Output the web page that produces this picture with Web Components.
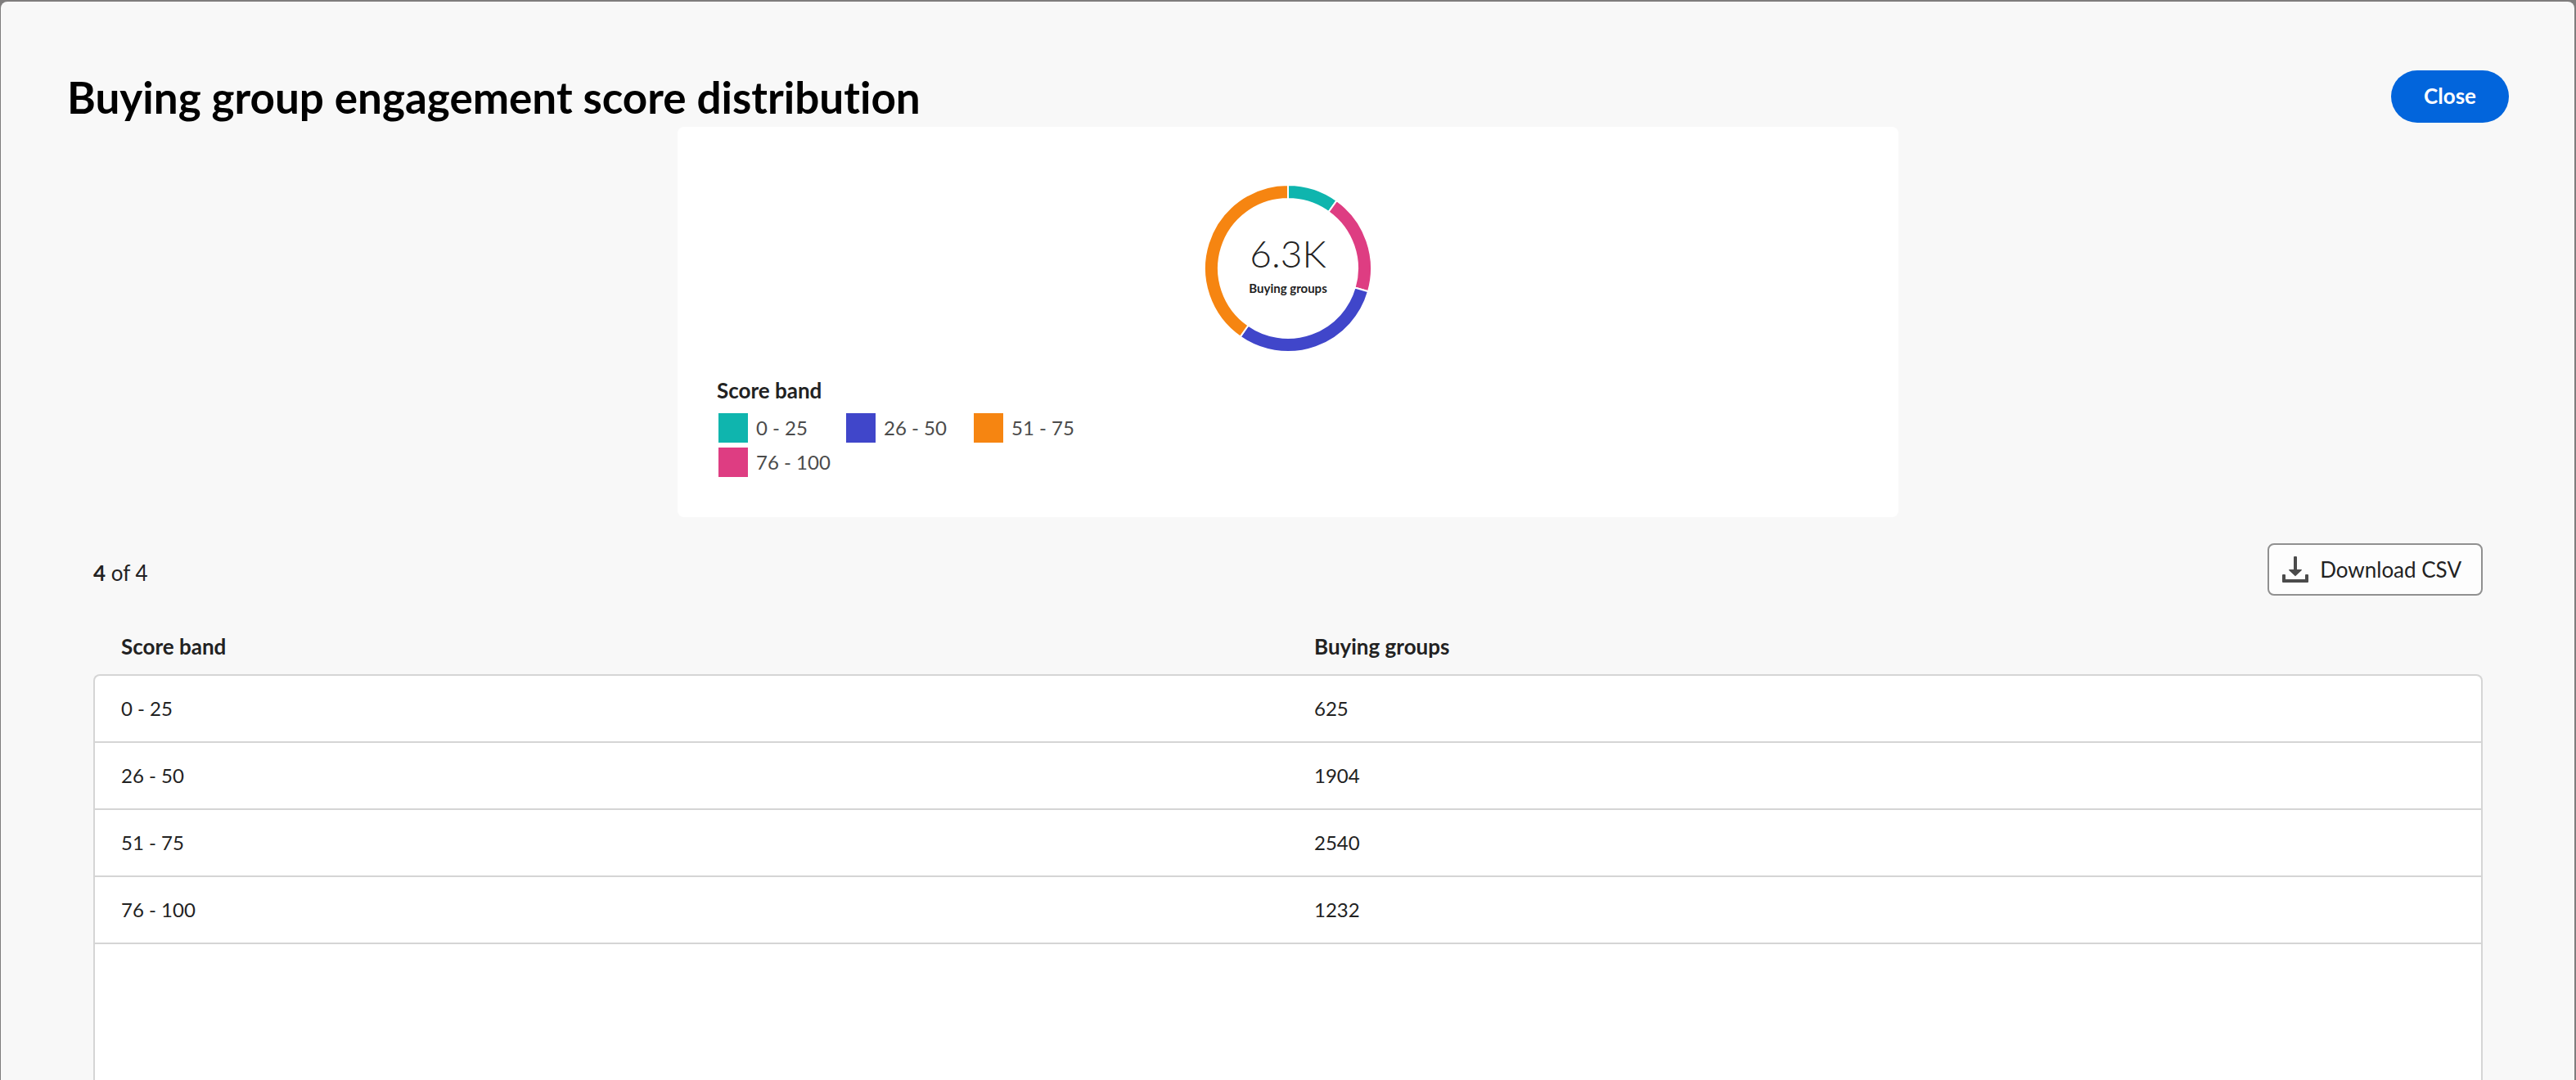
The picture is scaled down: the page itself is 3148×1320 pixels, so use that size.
<!DOCTYPE html>
<html lang="en">
<head>
<meta charset="utf-8">
<title>Buying group engagement score distribution</title>
<style>
html, body { margin: 0; height: 100%; }
body {
  background: #7f7d7d;
  color: #222;
  font-family: Lato, "Noto Sans", sans-serif;
  font-size: 26px;
  line-height: 32px;
  font-variant-ligatures: none;
  overflow: hidden;
}
</style>
</head>
<body>
<report-dialog heading="Buying group engagement score distribution">
  <pill-button slot="action">Close</pill-button>
  <chart-card>
    <donut-chart label="Buying groups" total="6.3K"></donut-chart>
    <chart-legend heading="Score band"></chart-legend>
  </chart-card>
  <table-toolbar shown="4" total="4">
    <download-button>Download CSV</download-button>
  </table-toolbar>
  <data-grid></data-grid>
</report-dialog>

<script>
const bands = [
  { name: "0 - 25", count: 625, color: "#0fb5ae" },
  { name: "26 - 50", count: 1904, color: "#4046ca" },
  { name: "51 - 75", count: 2540, color: "#f68511" },
  { name: "76 - 100", count: 1232, color: "#de3d82" }
];

class BaseElement extends HTMLElement {
  connectedCallback() {
    if (!this.shadowRoot) this.attachShadow({ mode: "open" }).innerHTML = this.render();
  }
}

customElements.define("report-dialog", class extends BaseElement {
  render() {
    return `<style>
      :host { display: block; height: 100%; box-sizing: border-box; padding: 2px 2px 0 1px; }
      section { height: 100%; box-sizing: border-box; display: flex; flex-direction: column;
        padding: 84px 80px 0 81px; background: #f8f8f8; border-radius: 8px 8px 0 0; }
      header { display: flex; justify-content: space-between; align-items: flex-start; height: 69px; flex: none; }
      h1 { margin: 0; font-size: 53px; line-height: 66px; font-weight: 700; color: #000; }
    </style>
    <section>
      <header><h1>${this.getAttribute("heading")}</h1><slot name="action"></slot></header>
      <slot></slot>
    </section>`;
  }
});

customElements.define("pill-button", class extends BaseElement {
  render() {
    return `<style>
      :host { display: block; }
      button { display: block; height: 64px; padding: 0 40px 2px; border: 0; border-radius: 32px;
        background: #0265dc; color: #fff; font: inherit; font-weight: 700; }
    </style><button type="button"><slot></slot></button>`;
  }
});

customElements.define("chart-card", class extends BaseElement {
  render() {
    return `<style>
      :host { display: flex; flex-direction: column; flex: none; width: 50%; box-sizing: border-box;
        align-self: center; padding: 72px 48px 49px; gap: 32px; border-radius: 8px; background: #fff; }
    </style><slot></slot>`;
  }
});

customElements.define("donut-chart", class extends BaseElement {
  render() {
    const order = [bands[0], bands[3], bands[1], bands[2]];
    const sum = order.reduce((n, b) => n + b.count, 0);
    const at = (r, a) => `${(101 + r * Math.sin(a)).toFixed(2)} ${(101 - r * Math.cos(a)).toFixed(2)}`;
    let angle = 0;
    const arcs = order.map(b => {
      const start = angle;
      angle += b.count / sum * 2 * Math.PI;
      return `<path fill="${b.color}" stroke="#fff" stroke-width="2" d="M${at(102, start)}A102 102 0 0 1 ${at(102, angle)}L${at(85, angle)}A85 85 0 0 0 ${at(85, start)}Z"/>`;
    }).join("");
    return `<style>
      :host { display: grid; place-items: center; }
      svg, div { grid-area: 1 / 1; }
      svg { display: block; width: 202px; height: 202px; overflow: visible; }
      div { text-align: center; padding-bottom: 4px; }
      strong { display: block; font-size: 46px; line-height: 52px; font-weight: 300; }
      span { display: block; font-size: 15px; line-height: 32px; font-weight: 700; }
    </style>
    <svg viewBox="0 0 202 202" aria-hidden="true">${arcs}</svg>
    <div><strong>${this.getAttribute("total")}</strong><span>${this.getAttribute("label")}</span></div>`;
  }
});

customElements.define("chart-legend", class extends BaseElement {
  render() {
    return `<style>
      :host { display: block; }
      h2 { margin: 0 0 12px; font-size: 26px; line-height: 32px; font-weight: 700; }
      ul { display: grid; grid-template-columns: repeat(3, 156px); gap: 6px 0; margin: 0; padding: 0 2px; list-style: none; font-size: 24px; color: #4b4b4b; }
      li { display: flex; align-items: center; gap: 10px; height: 36px; white-space: nowrap; }
      i { width: 36px; height: 36px; }
    </style>
    <h2>${this.getAttribute("heading")}</h2>
    <ul>${bands.map(b => `<li><i style="background:${b.color}"></i><span>${b.name}</span></li>`).join("")}</ul>`;
  }
});

customElements.define("table-toolbar", class extends BaseElement {
  render() {
    return `<style>
      :host { display: flex; flex: none; justify-content: space-between; align-items: center; margin: 32px 32px 0; }
      p { margin: 0; padding-top: 8px; }
    </style>
    <p><b>${this.getAttribute("shown")}</b> of ${this.getAttribute("total")}</p><slot></slot>`;
  }
});

customElements.define("download-button", class extends BaseElement {
  render() {
    return `<style>
      :host { display: block; }
      button { display: flex; align-items: center; gap: 14px; height: 64px; padding: 0 24px 0 16px;
        border: 2px solid #909090; border-radius: 8px; background: #fdfdfd; color: #222; font: inherit; }
      svg { display: block; width: 32px; height: 32px; }
    </style>
    <button type="button"><svg viewBox="0 0 32 32" fill="#4b4b4b" aria-hidden="true"><path d="M15 0h2a1 1 0 0 1 1 1v15h5.400a.6.6 0 0 1 .4 1L16.600 23.800a.8.8 0 0 1-1.200 0L8.200 17a.6.6 0 0 1 .4-1H14V1a1 1 0 0 1 1-1zM1 22h2a1 1 0 0 1 1 1v5h24v-5a1 1 0 0 1 1-1h2a1 1 0 0 1 1 1v8a1 1 0 0 1-1 1H1a1 1 0 0 1-1-1v-8a1 1 0 0 1 1-1z"/></svg><slot></slot></button>`;
  }
});

customElements.define("data-grid", class extends BaseElement {
  render() {
    return `<style>
      :host { display: flex; flex-direction: column; flex: 1; min-height: 0; margin: 32px 32px 0; }
      table { width: 100%; table-layout: fixed; border-collapse: separate; border-spacing: 0; }
      th, td { padding: 0 32px; text-align: left; box-sizing: border-box; }
      th { height: 64px; padding-bottom: 4px; font-weight: 700; }
      th:first-child { padding-left: 34px; }
      td { height: 82px; font-size: 24px; background: #fff; border-bottom: 2px solid #d5d5d5; }
      td:first-child { border-left: 2px solid #d5d5d5; }
      td:last-child { border-right: 2px solid #d5d5d5; }
      tbody tr:first-child td { height: 84px; border-top: 2px solid #d5d5d5; }
      tbody tr:first-child td:first-child { border-top-left-radius: 8px; }
      tbody tr:first-child td:last-child { border-top-right-radius: 8px; }
      .rest { flex: 1; background: #fff; border: solid #d5d5d5; border-width: 0 2px; }
    </style>
    <table>
      <thead><tr><th scope="col">Score band</th><th scope="col">Buying groups</th></tr></thead>
      <tbody>${bands.map(b => `<tr><td>${b.name}</td><td>${b.count}</td></tr>`).join("")}</tbody>
    </table>
    <div class="rest"></div>`;
  }
});
</script>
</body>
</html>
